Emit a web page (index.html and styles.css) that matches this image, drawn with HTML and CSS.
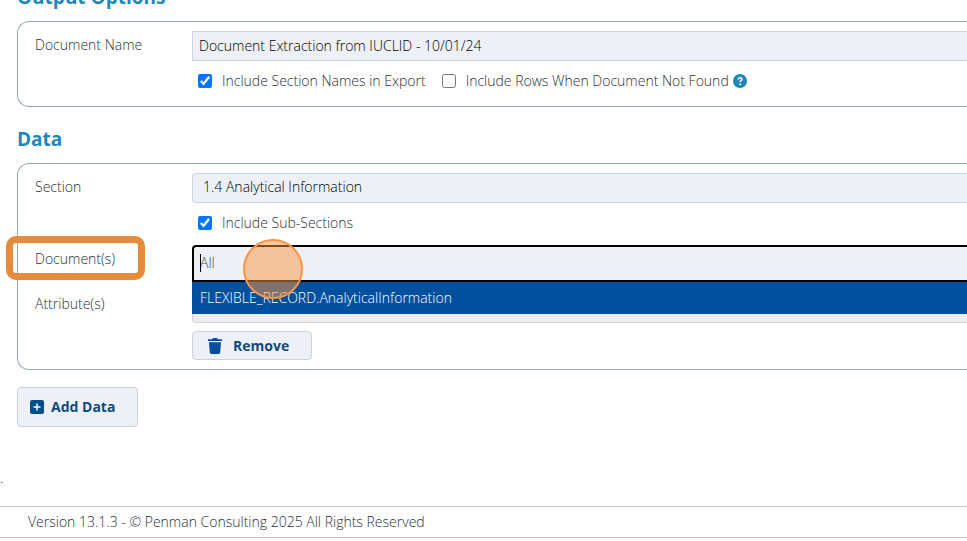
FILE: index.html
```html
<!DOCTYPE html>
<html lang="en">
<head>
  <meta charset="UTF-8" />
  <meta name="viewport" content="width=device-width, initial-scale=1.0"/>
  <title>Document Extraction</title>
  <link rel="stylesheet" href="styles.css">
</head>
<body>
  <main class="page">
    <h2 class="output-title">Output Options</h2>

    <section class="panel">
      <div class="row">
        <label class="row-label" for="docName">Document Name</label>
        <input class="field field-name" type="text" id="docName" value="Document Extraction from IUCLID - 10/01/24" />
      </div>
      <div class="checks">
        <label class="check"><input type="checkbox" checked /> Include Section Names in Export</label>
        <label class="check"><input type="checkbox" /> Include Rows When Document Not Found</label>
        <svg class="help" viewBox="0 0 14 14" aria-label="Help">
          <circle cx="7" cy="7" r="7" fill="#1c87bd"/>
          <path d="M5.1 5.5c.1-2.4 3.8-2.4 3.8-.2 0 1.4-1.8 1.3-1.8 2.8" fill="none" stroke="#fff" stroke-width="1.5"/>
          <circle cx="7.1" cy="10.2" r="1" fill="#fff"/>
        </svg>
      </div>
    </section>

    <h2 class="data-title">Data</h2>

    <section class="panel">
      <div class="row">
        <label class="row-label" for="section">Section</label>
        <select class="field field-section" id="section">
          <option>1.4 Analytical Information</option>
        </select>
      </div>
      <div class="checks">
        <label class="check"><input type="checkbox" checked /> Include Sub-Sections</label>
      </div>
      <div class="row row-documents">
        <label class="row-label" for="documents">Document(s)</label>
        <span class="highlight"></span>
        <div class="combo">
          <input class="combo-input" type="text" id="documents" placeholder="All" />
          <span class="caret"></span>
          <ul class="combo-list">
            <li class="combo-option">FLEXIBLE_RECORD.AnalyticalInformation</li>
          </ul>
          <span class="click-mark"></span>
        </div>
      </div>
      <div class="row">
        <label class="row-label" for="attributes">Attribute(s)</label>
        <input class="field field-attributes" type="text" id="attributes" />
      </div>
      <button class="btn btn-remove" type="button">
        <svg class="trash" viewBox="0 0 14 16">
          <path d="M0 1.2h4.2L5 0h4l.8 1.2H14v1.9H0zM1 4.2h12l-.8 10.4c-.1.9-.7 1.4-1.5 1.4H3.3c-.8 0-1.4-.5-1.5-1.4z" fill="#004f9e"/>
        </svg>
        Remove
      </button>
    </section>

    <button class="btn btn-add" type="button">
      <svg class="plus" viewBox="0 0 14 14">
        <rect width="14" height="14" rx="2" fill="#004f8c"/>
        <path d="M7 3.5v7M3.5 7h7" stroke="#fff" stroke-width="1.5"/>
      </svg>
      Add Data
    </button>
  </main>

  <p class="dot">.</p>
  <footer class="footer">Version 13.1.3 - © Penman Consulting 2025 All Rights Reserved</footer>
</body>
</html>
```

FILE: styles.css
```css
* {
  box-sizing: border-box;
}

body {
  margin: 0;
  font-family: "Open Sans", sans-serif;
  font-size: 14px;
  font-weight: 300;
  line-height: 20px;
  color: #1f2f3c;
  background-color: #fff;
  overflow: hidden;
}

.page {
  padding-left: 17px;
}

h2 {
  margin: 0;
  font-size: 19px;
  line-height: 28px;
  font-weight: 700;
  color: #1c87bd;
}

.output-title {
  margin-top: -17px;
  margin-bottom: 10px;
}

.data-title {
  margin-top: 18px;
  margin-bottom: 10px;
}

/* panels run off the right side of the page */
.panel {
  padding: 9px 0 9px 17px;
  border: 1px solid #98a9b0;
  border-right: 0;
  border-radius: 12px 0 0 12px;
}

.row {
  display: grid;
  grid-template-columns: 157px 1fr;
  position: relative;
}

.row-label {
  padding-top: 4px;
}

.field {
  width: 100%;
  height: 30px;
  border: 1px solid #ccd5dd;
  border-right: 0;
  background-color: #edf0f5;
  font: inherit;
}

.field-name {
  padding: 0 6px 2px;
  color: #000;
}

.field-section {
  appearance: none;
  padding: 0 10px 2px;
  border-radius: 4px 0 0 4px;
  color: #000;
}

.checks {
  display: flex;
  align-items: center;
  gap: 16px;
  padding: 10px 0 6px 163px;
}

.check {
  display: flex;
  align-items: center;
  gap: 10px;
}

.check input {
  width: 14px;
  height: 14px;
  margin: 0;
}

.help {
  width: 14px;
  height: 14px;
  margin-left: -12px;
}

.row-documents {
  z-index: 1;
  margin-top: 6px;
  margin-bottom: 8px;
}

.highlight {
  position: absolute;
  left: -29px;
  top: -9px;
  width: 139px;
  height: 44px;
  border: 7px solid #e58b3b;
  border-radius: 10px;
}

.combo {
  position: relative;
}

.combo-input {
  display: block;
  width: 100%;
  height: 37px;
  padding: 0 6px 2px;
  border: 2px solid #000;
  border-right: 0;
  border-radius: 4px 0 0 0;
  background-color: #edf0f5;
  font: inherit;
}

.combo-input::placeholder {
  color: #444;
}

.caret {
  position: absolute;
  left: 8px;
  top: 9px;
  width: 1px;
  height: 18px;
  background-color: #000;
}

.combo-list {
  position: absolute;
  left: 0;
  right: 0;
  top: 100%;
  margin: 0;
  padding: 0;
  list-style: none;
}

.combo-option {
  padding: 6px 8px;
  background-color: #00509e;
  color: #fff;
}

.click-mark {
  position: absolute;
  left: 51px;
  top: -6px;
  width: 60px;
  height: 60px;
  border: 2px solid #f5944a;
  border-radius: 50%;
  background-color: rgba(255, 147, 62, 0.5);
}

.field-attributes {
  height: 33px;
  border-radius: 4px 0 0 4px;
  background-color: #eeeded;
}

.btn {
  display: flex;
  align-items: center;
  border: 1px solid #c8d3dc;
  border-radius: 4px;
  background-color: #edf1f7;
  font: inherit;
  font-size: 14px;
  font-weight: 700;
  color: #0d4a80;
}

.btn-remove {
  height: 29px;
  margin: 8px 0 0 157px;
  padding: 0 22px 0 15px;
  gap: 11px;
}

.trash {
  width: 14px;
  height: 16px;
}

.btn-add {
  height: 40px;
  margin-top: 17px;
  padding: 0 22px 0 12px;
  gap: 7px;
}

.plus {
  width: 14px;
  height: 14px;
}

.dot {
  margin: 41px 0 18px;
}

.footer {
  padding: 5px 28px;
  border-top: 1px solid #c6c6c6;
  border-bottom: 1px solid #c6c6c6;
}
```
